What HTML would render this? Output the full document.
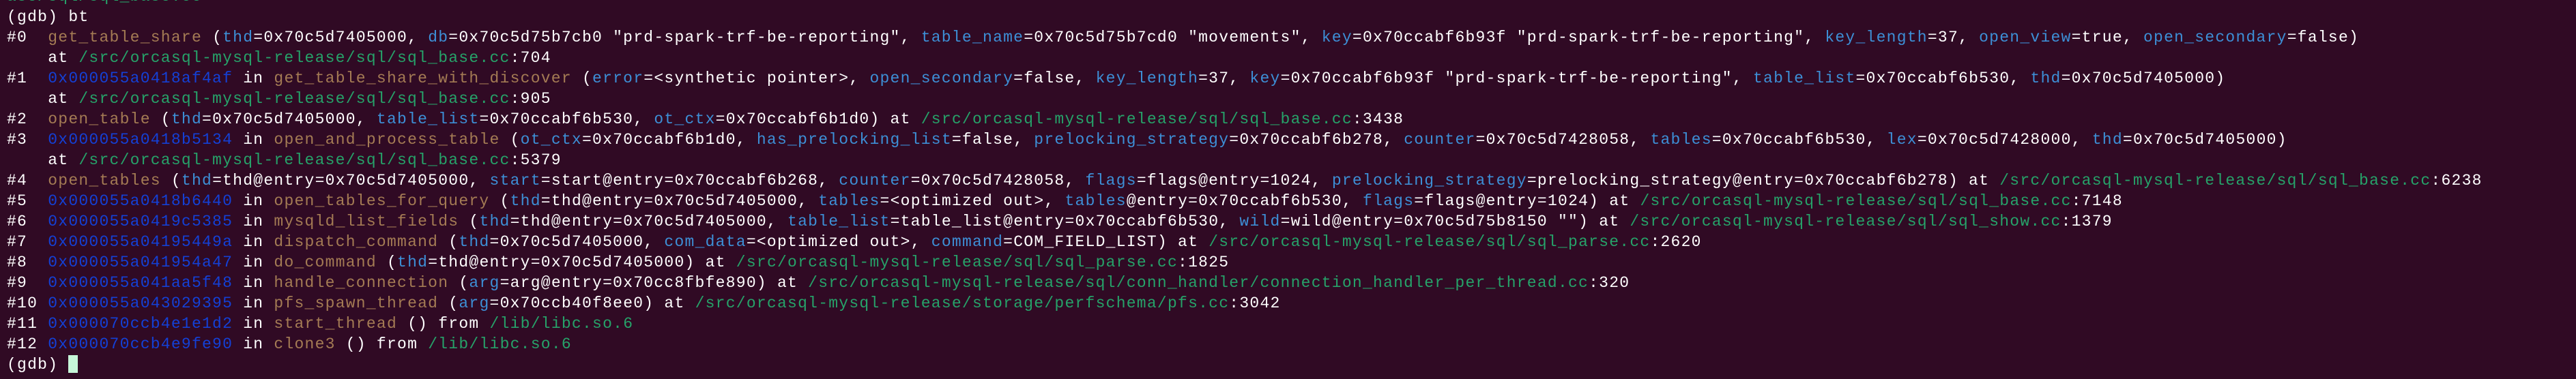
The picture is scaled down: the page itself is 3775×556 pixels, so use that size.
<!DOCTYPE html>
<html><head><meta charset="utf-8"><style>
html,body{margin:0;padding:0;background:#300a24;width:3775px;height:556px;overflow:hidden}
pre{margin:0;position:absolute;left:10px;top:-20px;font-family:"Liberation Mono",monospace;font-size:23px;letter-spacing:1.25px;line-height:30px;color:#ffffff;white-space:pre}
.f{color:#a47b54}.p{color:#3d8fd6}.a{color:#1440d6}.g{color:#26a269}
.c{display:inline-block;width:14px;height:26px;background:#c6f5d8;vertical-align:-6px}
</style></head><body><pre><span class="g">ase/sql/sql_base.cc</span>
(gdb) bt
#0  <span class="f">get_table_share</span> (<span class="p">thd</span>=0x70c5d7405000, <span class="p">db</span>=0x70c5d75b7cb0 "prd-spark-trf-be-reporting", <span class="p">table_name</span>=0x70c5d75b7cd0 "movements", <span class="p">key</span>=0x70ccabf6b93f "prd-spark-trf-be-reporting", <span class="p">key_length</span>=37, <span class="p">open_view</span>=true, <span class="p">open_secondary</span>=false)
    at <span class="g">/src/orcasql-mysql-release/sql/sql_base.cc</span>:704
#1  <span class="a">0x000055a0418af4af</span> in <span class="f">get_table_share_with_discover</span> (<span class="p">error</span>=&lt;synthetic pointer&gt;, <span class="p">open_secondary</span>=false, <span class="p">key_length</span>=37, <span class="p">key</span>=0x70ccabf6b93f "prd-spark-trf-be-reporting", <span class="p">table_list</span>=0x70ccabf6b530, <span class="p">thd</span>=0x70c5d7405000)
    at <span class="g">/src/orcasql-mysql-release/sql/sql_base.cc</span>:905
#2  <span class="f">open_table</span> (<span class="p">thd</span>=0x70c5d7405000, <span class="p">table_list</span>=0x70ccabf6b530, <span class="p">ot_ctx</span>=0x70ccabf6b1d0) at <span class="g">/src/orcasql-mysql-release/sql/sql_base.cc</span>:3438
#3  <span class="a">0x000055a0418b5134</span> in <span class="f">open_and_process_table</span> (<span class="p">ot_ctx</span>=0x70ccabf6b1d0, <span class="p">has_prelocking_list</span>=false, <span class="p">prelocking_strategy</span>=0x70ccabf6b278, <span class="p">counter</span>=0x70c5d7428058, <span class="p">tables</span>=0x70ccabf6b530, <span class="p">lex</span>=0x70c5d7428000, <span class="p">thd</span>=0x70c5d7405000)
    at <span class="g">/src/orcasql-mysql-release/sql/sql_base.cc</span>:5379
#4  <span class="f">open_tables</span> (<span class="p">thd</span>=thd@entry=0x70c5d7405000, <span class="p">start</span>=start@entry=0x70ccabf6b268, <span class="p">counter</span>=0x70c5d7428058, <span class="p">flags</span>=flags@entry=1024, <span class="p">prelocking_strategy</span>=prelocking_strategy@entry=0x70ccabf6b278) at <span class="g">/src/orcasql-mysql-release/sql/sql_base.cc</span>:6238
#5  <span class="a">0x000055a0418b6440</span> in <span class="f">open_tables_for_query</span> (<span class="p">thd</span>=thd@entry=0x70c5d7405000, <span class="p">tables</span>=&lt;optimized out&gt;, <span class="p">tables</span>@entry=0x70ccabf6b530, <span class="p">flags</span>=flags@entry=1024) at <span class="g">/src/orcasql-mysql-release/sql/sql_base.cc</span>:7148
#6  <span class="a">0x000055a0419c5385</span> in <span class="f">mysqld_list_fields</span> (<span class="p">thd</span>=thd@entry=0x70c5d7405000, <span class="p">table_list</span>=table_list@entry=0x70ccabf6b530, <span class="p">wild</span>=wild@entry=0x70c5d75b8150 "") at <span class="g">/src/orcasql-mysql-release/sql/sql_show.cc</span>:1379
#7  <span class="a">0x000055a04195449a</span> in <span class="f">dispatch_command</span> (<span class="p">thd</span>=0x70c5d7405000, <span class="p">com_data</span>=&lt;optimized out&gt;, <span class="p">command</span>=COM_FIELD_LIST) at <span class="g">/src/orcasql-mysql-release/sql/sql_parse.cc</span>:2620
#8  <span class="a">0x000055a041954a47</span> in <span class="f">do_command</span> (<span class="p">thd</span>=thd@entry=0x70c5d7405000) at <span class="g">/src/orcasql-mysql-release/sql/sql_parse.cc</span>:1825
#9  <span class="a">0x000055a041aa5f48</span> in <span class="f">handle_connection</span> (<span class="p">arg</span>=arg@entry=0x70cc8fbfe890) at <span class="g">/src/orcasql-mysql-release/sql/conn_handler/connection_handler_per_thread.cc</span>:320
#10 <span class="a">0x000055a043029395</span> in <span class="f">pfs_spawn_thread</span> (<span class="p">arg</span>=0x70ccb40f8ee0) at <span class="g">/src/orcasql-mysql-release/storage/perfschema/pfs.cc</span>:3042
#11 <span class="a">0x000070ccb4e1e1d2</span> in <span class="f">start_thread</span> () from <span class="g">/lib/libc.so.6</span>
#12 <span class="a">0x000070ccb4e9fe90</span> in <span class="f">clone3</span> () from <span class="g">/lib/libc.so.6</span>
(gdb) <span class="c"></span></pre></body></html>
